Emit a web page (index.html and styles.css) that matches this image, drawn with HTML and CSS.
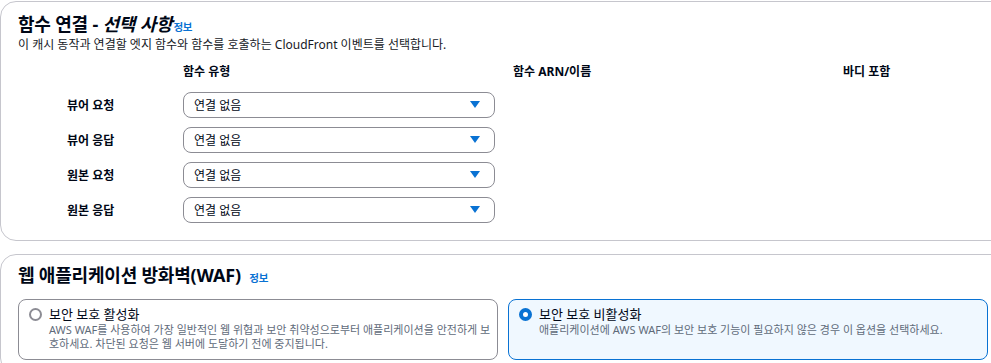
FILE: index.html
```html
<!DOCTYPE html>
<html lang="ko">
<head>
    <meta charset="UTF-8">
    <title>함수 연결</title>
    <link rel="stylesheet" href="styles.css">
</head>
<body>
    <section class="card">
        <h2 class="card-title">함수 연결 - <em>선택 사항</em><a href="#" class="info tight">정보</a></h2>
        <p class="card-desc">이 캐시 동작과 연결할 엣지 함수와 함수를 호출하는 CloudFront 이벤트를 선택합니다.</p>

        <div class="assoc-grid">
            <div></div>
            <div class="col-head">함수 유형</div>
            <div class="col-head">함수 ARN/이름</div>
            <div class="col-head">바디 포함</div>

            <div class="row-label">뷰어 요청</div>
            <div class="select"><span>연결 없음</span><span class="caret"></span></div>
            <div></div><div></div>

            <div class="row-label">뷰어 응답</div>
            <div class="select"><span>연결 없음</span><span class="caret"></span></div>
            <div></div><div></div>

            <div class="row-label">원본 요청</div>
            <div class="select"><span>연결 없음</span><span class="caret"></span></div>
            <div></div><div></div>

            <div class="row-label">원본 응답</div>
            <div class="select"><span>연결 없음</span><span class="caret"></span></div>
            <div></div><div></div>
        </div>
    </section>

    <section class="card waf">
        <h2 class="card-title">웹 애플리케이션 방화벽(WAF) <a href="#" class="info">정보</a></h2>
        <div class="tiles">
            <label class="tile">
                <span class="radio"></span>
                <span class="tile-body">
                    <span class="tile-label">보안 보호 활성화</span>
                    <span class="tile-desc">AWS WAF를 사용하여 가장 일반적인 웹 위협과 보안 취약성으로부터 애플리케이션을 안전하게 보호하세요. 차단된 요청은 웹 서버에 도달하기 전에 중지됩니다.</span>
                </span>
            </label>
            <label class="tile selected">
                <span class="radio"></span>
                <span class="tile-body">
                    <span class="tile-label">보안 보호 비활성화</span>
                    <span class="tile-desc">애플리케이션에 AWS WAF의 보안 보호 기능이 필요하지 않은 경우 이 옵션을 선택하세요.</span>
                </span>
            </label>
        </div>
    </section>
</body>
</html>
```

FILE: styles.css
```css
* {
    margin: 0;
    padding: 0;
    box-sizing: border-box;
}

body {
    font-family: "Noto Sans", "Noto Sans CJK KR", sans-serif;
    color: #000716;
    background: #ffffff;
    padding-top: 1px;
    overflow: hidden;
}

.card {
    width: calc(100% + 16px);
    border: 1px solid #c6c6cd;
    border-radius: 16px;
    padding: 11px 18px 0 17px;
    height: 240px;
}

.card.waf {
    margin-top: 13px;
    height: 120px;
    padding-top: 9px;
}

.card-title {
    font-size: 18px;
    font-weight: 700;
    line-height: 22px;
    letter-spacing: -0.2px;
}

.card-title em {
    font-style: italic;
}

.info {
    color: #0972d3;
    font-size: 10.5px;
    font-weight: 700;
    text-decoration: none;
    margin-left: 4px;
}

.info.tight {
    margin-left: 1px;
}

.card-desc {
    font-size: 12px;
    line-height: 16px;
    color: #16191f;
    margin-top: -1px;
}

.assoc-grid {
    display: grid;
    grid-template-columns: 165px 330px 330px 1fr;
    grid-template-rows: 34px;
    grid-auto-rows: 35px;
    align-items: center;
}

.col-head {
    font-size: 12px;
    font-weight: 700;
    line-height: 16px;
    align-self: start;
    padding-top: 11px;
}

.row-label {
    font-size: 12px;
    font-weight: 700;
    padding-left: 49px;
}

.select {
    width: 312px;
    height: 26px;
    border: 1px solid #8c8c94;
    border-radius: 8px;
    display: flex;
    align-items: center;
    justify-content: space-between;
    padding: 0 14px 0 10px;
    font-size: 12px;
}

.caret {
    width: 0;
    height: 0;
    border-left: 5px solid transparent;
    border-right: 5px solid transparent;
    border-top: 7px solid #0972d3;
}

.tiles {
    display: grid;
    grid-template-columns: 1fr 1fr;
    gap: 10px;
    margin-top: 10px;
}

.tile {
    display: flex;
    align-items: flex-start;
    gap: 7px;
    height: 61px;
    border: 1px solid #8c8c94;
    border-radius: 8px;
    padding: 5px 6px 0 10px;
}

.tile.selected {
    border-color: #0972d3;
    background: #f0f8ff;
}

.radio {
    flex: none;
    width: 13px;
    height: 13px;
    margin-top: 3px;
    border: 2px solid #8c8c94;
    border-radius: 50%;
    background: #ffffff;
}

.tile.selected .radio {
    border: 4px solid #0972d3;
}

.tile-body {
    display: flex;
    flex-direction: column;
}

.tile-label {
    font-size: 13px;
    line-height: 18px;
}

.tile-desc {
    font-size: 11px;
    line-height: 14px;
    color: #5f6b7a;
}
```
